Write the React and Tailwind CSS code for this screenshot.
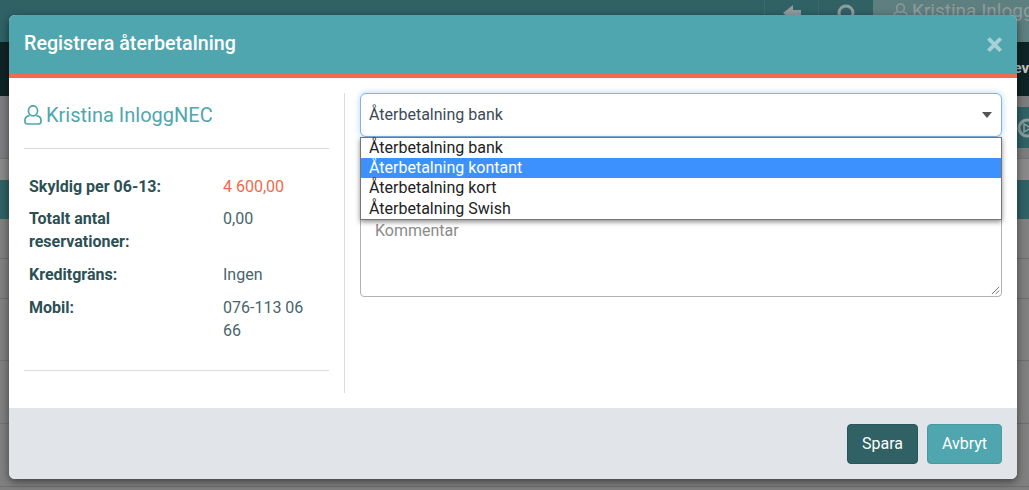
import React from "react";

const font = { fontFamily: "Roboto, sans-serif" };

function UserIcon({ className }) {
  return (
    <svg viewBox="0 0 18 20" fill="none" stroke="currentColor" strokeWidth="1.7" className={className}>
      <ellipse cx="9" cy="5.8" rx="4.6" ry="5" />
      <path d="M5.6 10.6 C3 11 1 12.6 1 15 V16.6 C1 18 2 19 3.4 19 H14.6 C16 19 17 18 17 16.6 V15 C17 12.6 15 11 12.4 10.6" />
    </svg>
  );
}

function InfoRow({ label, children, className = "pb-[10px]" }) {
  return (
    <div className={`flex ${className}`}>
      <div className="w-[194px] shrink-0 pr-[15px] font-bold text-[#2c5053]">{label}</div>
      <div className="w-[90px] shrink-0 text-[#47656a]">{children}</div>
    </div>
  );
}

function Background() {
  return (
    <div className="flex flex-col h-[490px] overflow-hidden bg-[#808080]">
      <div className="h-[42px] shrink-0 flex justify-end bg-[#2f6165]">
        <div className="w-[54px] border-l border-[#3b6a6d] flex justify-center items-start pt-[3px]">
          <svg viewBox="0 0 20 20" className="w-[20px] h-[20px] text-[#8f9c9c]" fill="currentColor"><path d="M1 10 11 2v5h8v6H11v5z" /></svg>
        </div>
        <div className="w-[55px] border-l border-[#3b6a6d] flex justify-center items-start pt-[4px]">
          <svg viewBox="0 0 20 20" className="w-[20px] h-[20px] text-[#8f9c9c]" fill="none" stroke="currentColor" strokeWidth="3"><circle cx="10" cy="9" r="7" /></svg>
        </div>
        <div className="w-[156px] bg-[#5e7f80] flex gap-[4px] pl-[20px] text-[19px] text-[#8f9c9c] leading-[22px] whitespace-nowrap overflow-hidden">
          <UserIcon className="w-[15px] h-[17px] mt-[3px] shrink-0" />
          Kristina Inlogg
        </div>
      </div>
      <div className="h-[54px] shrink-0 bg-[#0f2426] flex justify-end items-center text-[15px] font-bold text-[#c0c6c6] pb-[1px]">ev</div>
      <div className="h-[62px] shrink-0 bg-[#7d7d7f] pt-[11px]">
        <div className="h-[41px] ml-[1000px] bg-[#2f6165] flex justify-end items-center overflow-hidden">
          <svg viewBox="0 0 20 20" className="w-[20px] h-[20px] -mr-[8px] shrink-0 text-[#8c9d9e]" fill="none" stroke="currentColor" strokeWidth="3"><circle cx="10" cy="10" r="8" /><path d="M7 6l7 4-7 4z" strokeWidth="1.5" /></svg>
        </div>
      </div>
      <div className="h-[22px] shrink-0 bg-[#8a8a8a] border-t border-[#747474]" />
      <div className="h-[39px] shrink-0 bg-[#2f6165]" />
      <div className="h-[40px] shrink-0 border-b border-[#6f6f6f]" />
      <div className="h-[40px] shrink-0 border-b border-[#6f6f6f]" />
      <div className="h-[62px] shrink-0 border-b border-[#6f6f6f]" />
      <div className="h-[63px] shrink-0 border-b border-[#6f6f6f]" />
      <div className="h-[63px] shrink-0 border-b border-[#6f6f6f]" />
    </div>
  );
}

export default function App() {
  return (
    <div className="relative w-[1029px] h-[490px] overflow-hidden" style={font}>
      <Background />
      <div className="absolute left-[9px] top-[15px] w-[1008px] h-[464px] flex flex-col rounded-[6px] overflow-hidden bg-white shadow-[0_3px_9px_rgba(0,0,0,0.5)]">
        <div className="h-[63px] shrink-0 flex items-center justify-between pl-[15px] pr-[14px] pb-[1px] bg-[#50a6ae] border-b-4 border-[#ef6c4f] text-white">
          <h1 className="text-[19.7px] font-medium leading-none">Registrera återbetalning</h1>
          <span className="text-[32px] font-bold leading-none -mt-[1px] text-[#a5d2d6]">×</span>
        </div>
        <div className="h-[330px] shrink-0 flex pt-[15px] pl-[15px] pr-[15px]">
          <div className="w-[305px] h-[300px] shrink-0 flex flex-col text-[16px] leading-[23px]">
            <div className="h-[56px] shrink-0 flex items-start gap-[4px] pt-[9px] border-b border-[#dcdcdc] text-[#50a6ae] text-[20px] leading-[26px]">
              <UserIcon className="w-[18px] h-[20px] mt-[3px] shrink-0" />
              Kristina InloggNEC
            </div>
            <div className="pl-[5px] pt-[26px] border-b border-[#dcdcdc] h-[222px] shrink-0">
              <InfoRow label="Skyldig per 06-13:" className="pb-[9px]"><span className="text-[#f0694c]">4 600,00</span></InfoRow>
              <InfoRow label="Totalt antal reservationer:">0,00</InfoRow>
              <InfoRow label="Kreditgräns:">Ingen</InfoRow>
              <InfoRow label="Mobil:">076-113 06 66</InfoRow>
            </div>
          </div>
          <div className="w-px h-[300px] ml-[15px] mr-[15px] shrink-0 bg-[#dcdcdc]" />
          <div className="relative w-[642px] flex flex-col">
            <div className="h-[44px] shrink-0 flex items-center justify-between pl-[8px] pr-[9px] rounded-[6px] border border-[#7fb4ea] bg-white shadow-[0_0_6px_rgba(102,175,233,0.5)] text-[16px] text-[#3d4a55]">
              <span>Återbetalning bank</span>
              <span className="w-0 h-0 border-x-[5.5px] border-t-[6px] border-x-transparent border-t-[#555555]" />
            </div>
            <div className="h-[85px] mt-[75px] shrink-0 rounded-[4px] border border-[#b3b3b3] pl-[14px] pt-[8px] text-[16px] leading-[20px] text-[#8a8a8a] relative">
              Kommentar
              <svg viewBox="0 0 10 10" className="absolute right-[1px] bottom-[1px] w-[9px] h-[9px] text-[#666666]" stroke="currentColor" strokeWidth="1"><path d="M1 9 9 1M5 9 9 5" /></svg>
            </div>
            <ul className="absolute left-0 top-[44px] w-[642px] h-[83px] border border-[#767676] bg-white text-[16px] leading-[20.2px] text-[#222222] shadow-[0_2px_5px_rgba(0,0,0,0.45)]">
              <li className="pl-[8px]">Återbetalning bank</li>
              <li className="pl-[8px] bg-[#3c91ff] text-white">Återbetalning kontant</li>
              <li className="pl-[8px]">Återbetalning kort</li>
              <li className="pl-[8px]">Återbetalning Swish</li>
            </ul>
          </div>
        </div>
        <div className="flex-1 flex justify-end items-start gap-[9px] pt-[16px] pr-[15px] bg-[#e1e4e9] text-[16px] text-white">
          <button className="w-[71px] h-[40px] rounded-[4px] bg-[#2f6165] border border-[#28565a]">Spara</button>
          <button className="w-[75px] h-[40px] rounded-[4px] bg-[#50a6ae] border border-[#469aa2]">Avbryt</button>
        </div>
      </div>
    </div>
  );
}
